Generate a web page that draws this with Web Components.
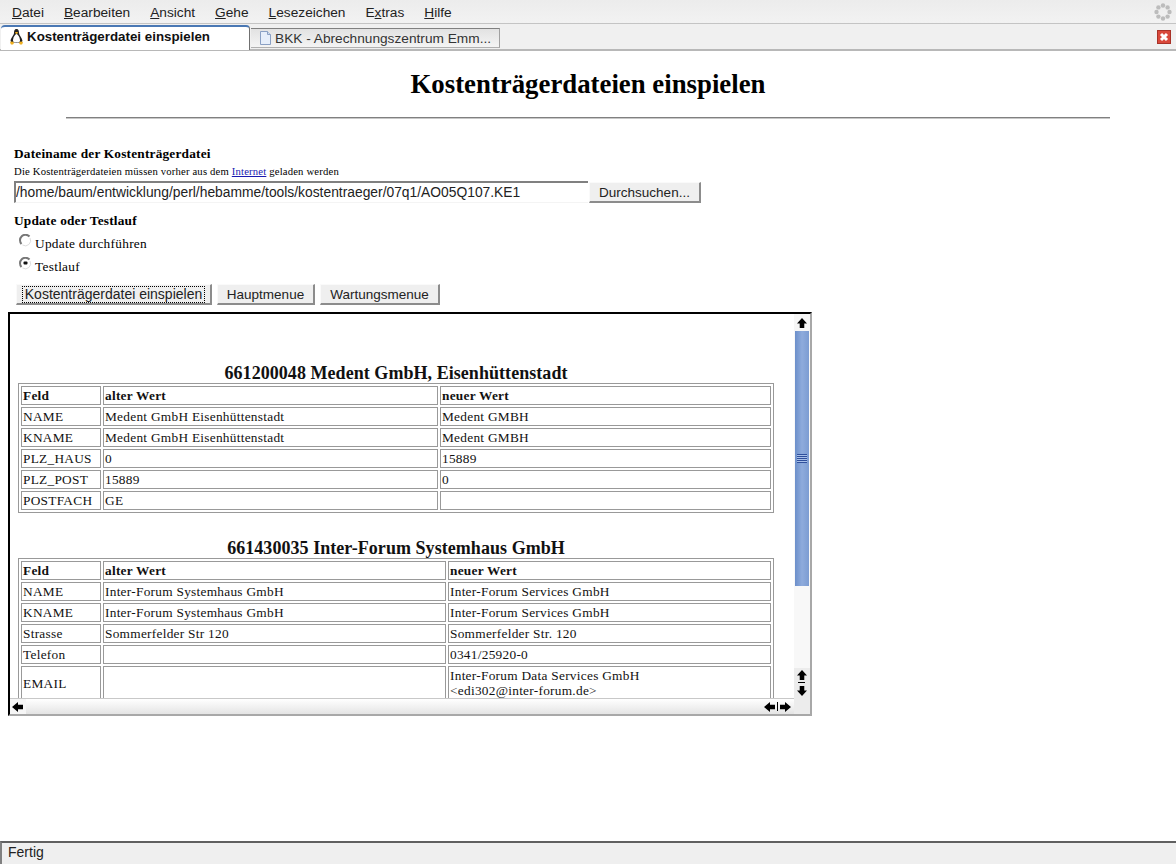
<!DOCTYPE html>
<html lang="de">
<head>
<meta charset="utf-8">
<title>Kostenträgerdateien einspielen</title>
<style>
  html, body { margin: 0; height: 100%; }
  body {
    display: flex;
    flex-direction: column;
    height: 864px;
    overflow: hidden;
    background: #fff;
    font-family: "Liberation Serif", serif;
  }
  form-page { flex: 1; min-height: 0; }
</style>
</head>
<body>
<browser-menubar></browser-menubar>
<browser-tabs></browser-tabs>
<form-page>
  <frame-box>
    <change-table id="t1" title="661200048 Medent GmbH, Eisenhüttenstadt" cols="80,335,331"></change-table>
    <change-table id="t2" title="661430035 Inter-Forum Systemhaus GmbH" cols="80,343,323"></change-table>
  </frame-box>
</form-page>
<browser-status>Fertig</browser-status>

<script>
class BrowserMenubar extends HTMLElement {
  constructor() {
    super();
    const items = [["D","atei"],["B","earbeiten"],["A","nsicht"],["G","ehe"],["L","esezeichen"],["E","x","tras"],["H","ilfe"]];
    const links = items.map((i) => {
      if (i.length == 3) return `<span>${i[0]}<u>${i[1]}</u>${i[2]}</span>`;
      return `<span><u>${i[0]}</u>${i[1]}</span>`;
    }).join("");
    this.attachShadow({ mode: "open" }).innerHTML = `
      <style>
        :host {
          display: flex;
          align-items: center;
          justify-content: space-between;
          height: 22px;
          flex: none;
          padding: 1px 4px 0 12px;
          background: linear-gradient(#ececec, #f2f2f2);
          border-bottom: 1px solid #c4c4c4;
          font: 13.7px "Liberation Sans", sans-serif;
          color: #222;
        }
        nav { display: flex; gap: 20px; }
      </style>
      <nav>${links}</nav>
      <svg width="18" height="18" viewBox="0 0 18 18" fill="#bcbcbc">
        <circle cx="9" cy="2.5" r="2.2"/><circle cx="13.6" cy="4.4" r="2.2"/><circle cx="15.5" cy="9" r="2.2"/>
        <circle cx="13.6" cy="13.6" r="2.2"/><circle cx="9" cy="15.5" r="2.2"/><circle cx="4.4" cy="13.6" r="2.2"/>
        <circle cx="2.5" cy="9" r="2.2"/><circle cx="4.4" cy="4.4" r="2.2"/>
      </svg>`;
  }
}

class BrowserTabs extends HTMLElement {
  constructor() {
    super();
    this.attachShadow({ mode: "open" }).innerHTML = `
      <style>
        :host {
          display: flex;
          align-items: flex-end;
          height: 27px;
          flex: none;
          background: #f0f0f0;
          box-sizing: border-box;
          border-bottom: 2px solid #b8b8b8;
          font: 13.7px "Liberation Sans", sans-serif;
          color: #333;
          position: relative;
        }
        .tab { display: flex; align-items: center; box-sizing: border-box; }
        .on {
          width: 249px;
          height: 25px;
          margin: 0 0 -1px 1px;
          padding: 0 0 5px 8px;
          gap: 3px;
          background: #fff;
          border-top: 2px solid #4a78b4;
          border-right: 1px solid #707070;
          border-radius: 4px 4px 0 0;
          font-size: 13.33px;
          font-weight: bold;
          color: #111;
        }
        .off {
          width: 249px;
          height: 20px;
          padding: 0 0 0 7px;
          gap: 2px;
          margin: 0 0 1px 1px;
          background: linear-gradient(#e2e2e2, #f4f4f4);
          border-top: 1px solid #808080;
          border-right: 1px solid #a0a0a0;
          border-bottom: 1px solid #b0b0b0;
        }
        .close { position: absolute; right: 5px; top: 6px; display: block; }
      </style>
      <div class="tab on">
        <svg width="15" height="17" viewBox="0 0 15 17">
          <path d="M7.500 1C5.400 1 5 3 5 5 5 7 2 10 1.600 12.600 1.400 14 3 15 7.500 15s6.100-1 5.900-2.400C13 10 10 7 10 5c0-2-.4-4-2.500-4z" fill="#222"/>
          <path d="M7.500 6C6 6 4 10 4 12.400 4 14 5.500 14.500 7.500 14.500S11 14 11 12.400C11 10 9 6 7.500 6z" fill="#fff"/>
          <path d="M6.500 4h2l.5 1-1.500 1-1.500-1z" fill="#f0b020"/>
          <path d="M1 14.500c1-1.500 3-1.500 4 .5l-1 1.500H2zM14 14.500c-1-1.500-3-1.500-4 .5l1 1.500h2z" fill="#f0b020"/>
        </svg>
        <span>Kostenträgerdatei einspielen</span>
      </div>
      <div class="tab off">
        <svg width="15" height="16" viewBox="0 0 15 16">
          <path d="M2.500 1.500h7l3 3v10h-10z" fill="#e6eefa" stroke="#8aa0c4"/>
          <path d="M9.500 1.500v3h3" fill="#cfdcf0" stroke="#8aa0c4"/>
        </svg>
        <span>BKK - Abrechnungszentrum Emm...</span>
      </div>
      <svg class="close" width="14" height="14" viewBox="0 0 14 14">
        <rect x=".5" y=".5" width="13" height="13" fill="#d9483b" stroke="#a83228"/>
        <path d="M4 4l6 6M10 4l-6 6" stroke="#fff" stroke-width="3"/>
      </svg>`;
  }
}

class FormPage extends HTMLElement {
  constructor() {
    super();
    this.attachShadow({ mode: "open" }).innerHTML = `
      <style>
        :host { display: block; padding: 0 8px; color: #000; font: 13.33px "Liberation Serif", serif; overflow: hidden; }
        h1 { font-size: 26.8px; line-height: 31px; margin: 0; padding-top: 18px; text-align: center; }
        hr {
          width: 90%;
          height: 0;
          margin: 17px auto 0;
          border: 0;
          border-top: 1px solid #808080;
          border-bottom: 1px solid #c8c8c8;
        }
        .block { padding: 0 6px; }
        h3 { margin: 0; font-size: 13.33px; line-height: 16px; letter-spacing: .19px; }
        .first { padding-top: 27px; }
        small { display: block; font-size: 10.67px; line-height: 14px; padding-top: 2px; letter-spacing: .18px; }
        a { color: #1a1ab0; }
        .file { display: flex; margin-top: 3px; }
        .path {
          box-sizing: border-box;
          width: 574px;
          height: 22px;
          padding: 1px 0 0 0;
          border-top: 2px solid #808080;
          border-left: 2px solid #808080;
          border-bottom: 1px solid #f4f4f4;
          font: 13.83px/17px "Liberation Sans", sans-serif;
          color: #222;
          white-space: nowrap;
          overflow: hidden;
        }
        .second { padding-top: 10px; }
        .radio { display: flex; align-items: flex-start; gap: 3px; height: 23px; padding: 7px 0 0 5px; box-sizing: border-box; letter-spacing: .28px; }
        .radio span { line-height: 16px; }
        .radio svg { margin-top: -2px; }
        .buttons { display: flex; gap: 5px; padding: 9px 0 7px 2px; }
        .buttons gray-button { padding-top: 1px; }
      </style>
      <h1>Kostenträgerdateien einspielen</h1>
      <hr>
      <div class="block first">
        <h3>Dateiname der Kostenträgerdatei</h3>
        <small>Die Kostenträgerdateien müssen vorher aus dem <a href="#">Internet</a> geladen werden</small>
        <div class="file">
          <div class="path">/home/baum/entwicklung/perl/hebamme/tools/kostentraeger/07q1/AO05Q107.KE1</div>
          <gray-button style="margin:1px 0 0 1px;width:112px">Durchsuchen...</gray-button>
        </div>
      </div>
      <div class="block second">
        <h3>Update oder Testlauf</h3>
        <div class="radio">
          <svg width="13" height="13" viewBox="0 0 13 13"><path d="M10.500 2.500A5.300 5.300 0 0 0 2.500 10" fill="none" stroke="#777" stroke-width="2"/><path d="M11 4a5.300 5.300 0 0 1-7.500 7" fill="none" stroke="#ddd"/></svg>
          <span>Update durchführen</span>
        </div>
        <div class="radio">
          <svg width="13" height="13" viewBox="0 0 13 13"><path d="M10.500 2.500A5.300 5.300 0 0 0 2.500 10" fill="none" stroke="#777" stroke-width="2"/><path d="M11 4a5.300 5.300 0 0 1-7.500 7" fill="none" stroke="#ddd"/><rect x="4.500" y="4.500" width="4" height="3" rx="1" fill="#111"/></svg>
          <span>Testlauf</span>
        </div>
        <div class="buttons">
          <gray-button focused style="width:196px">Kostenträgerdatei einspielen</gray-button>
          <gray-button style="width:98px">Hauptmenue</gray-button>
          <gray-button style="width:120px">Wartungsmenue</gray-button>
        </div>
      </div>
      <slot></slot>`;
  }
}

class GrayButton extends HTMLElement {
  constructor() {
    super();
    this.attachShadow({ mode: "open" }).innerHTML = `
      <style>
        :host {
          display: flex;
          align-items: center;
          justify-content: center;
          box-sizing: border-box;
          height: 21px;
          background: #efefef;
          border-top: 1px solid #fafafa;
          border-left: 1px solid #fafafa;
          border-right: 2px solid #8c8c8c;
          border-bottom: 2px solid #8c8c8c;
          font: 13.5px "Liberation Sans", sans-serif;
          color: #222;
        }
        :host([focused]) { font-size: 14px; }
        :host([focused]) span { outline: 1px dotted #000; padding: 0 2px; line-height: 15px; }
      </style>
      <span><slot></slot></span>`;
  }
}

class FrameBox extends HTMLElement {
  constructor() {
    super();
    const up = '<path d="M5.500 0L0 6h3v5h5V6h3z" fill="#000"/>';
    const down = '<path d="M5.500 11L0 5h3V0h5v5h3z" fill="#000"/>';
    const left = '<path d="M0 5.500L6 0v3h5v5H6v3z" fill="#000"/>';
    const right = '<path d="M11 5.500L5 0v3H0v5h5v3z" fill="#000"/>';
    const icon = (d) => `<svg width="10" height="10" viewBox="0 0 11 11">${d}</svg>`;
    const wide = (d) => `<svg width="11" height="10" viewBox="0 0 11 11" preserveAspectRatio="none">${d}</svg>`;
    this.attachShadow({ mode: "open" }).innerHTML = `
      <style>
        :host {
          display: grid;
          grid-template-columns: 784px 16px;
          grid-template-rows: 384px 16px;
          width: 804px;
          box-sizing: border-box;
          border-top: 2px solid #000;
          border-left: 2px solid #000;
          border-right: 2px solid #a8a8a8;
          border-bottom: 2px solid #a8a8a8;
        }
        .view { overflow: hidden; padding: 49px 20px 0 8px; box-sizing: border-box; background: #fff; }
        .v { display: flex; flex-direction: column; background: #f8f8f8; }
        .h { display: flex; justify-content: space-between; align-items: center; background: linear-gradient(#fff, #e4e4e4); border-top: 1px solid #c8c8c8; box-sizing: border-box; }
        .corner { background: #ececec; }
        .btn { height: 17px; display: flex; align-items: center; justify-content: center; flex: none; background: #f6f6f6; padding-right: 1px; box-sizing: border-box; }
        .thumb {
          flex: 1;
          margin: 0 1px;
          display: flex;
          align-items: center;
          justify-content: center;
          background: linear-gradient(90deg, #6c8fca, #8eabdc 50%, #7c9cd2);
        }
        .grip { width: 10px; height: 9px; background: repeating-linear-gradient(#2f4f9c 0 1px, #a8c0e8 1px 2px); }
        .gap { flex: none; height: 82px; }
        .pair { display: flex; flex-direction: column; background: #ececec; }
        .pair .btn { height: 14px; background: #ececec; }
        .pair .btn + hr + .btn { height: 15px; }
        .pair hr { margin: 0 5px 0 4px; border: 0; border-top: 1px solid #000; }
        .hpair { display: flex; align-items: center; padding-right: 3px; }
        .hpair i { width: 1px; height: 9px; background: #000; margin: 0 2px 0 2px; }
      </style>
      <div class="view"><slot></slot></div>
      <div class="v">
        <div class="btn">${icon(up)}</div>
        <div class="thumb"><div class="grip"></div></div>
        <div class="gap"></div>
        <div class="pair">
          <div class="btn">${icon(up)}</div>
          <hr>
          <div class="btn">${icon(down)}</div>
        </div>
      </div>
      <div class="h">
        <div class="btn" style="width:16px;height:15px">${wide(left)}</div>
        <div class="hpair">
          ${wide(left)}<i></i>${wide(right)}
        </div>
      </div>
      <div class="corner"></div>`;
  }
}

class ChangeTable extends HTMLElement {
  set rows(rows) {
    const cols = this.getAttribute("cols").split(",");
    const widths = cols.map((c) => `<col style="width:${c}px">`).join("");
    const body = rows.map((r) => `<tr>${r.map((c) => `<td>${c}</td>`).join("")}</tr>`).join("");
    this.attachShadow({ mode: "open" }).innerHTML = `
      <style>
        :host { display: block; margin-bottom: 25px; font: 13.33px "Liberation Serif", serif; color: #111; letter-spacing: .27px; }
        h2 { margin: 0; font-size: 18px; line-height: 20px; text-align: center; letter-spacing: .05px; }
        table {
          table-layout: fixed;
          width: 756px;
          border: 1px solid #999;
          border-spacing: 2px;
          border-collapse: separate;
        }
        th, td {
          border: 1px solid #999;
          padding: 1px;
          height: 15px;
          line-height: 15px;
          text-align: left;
          overflow: visible;
        }
      </style>
      <h2>${this.getAttribute("title")}</h2>
      <table>
        <colgroup>${widths}</colgroup>
        <tr><th>Feld</th><th>alter Wert</th><th>neuer Wert</th></tr>
        ${body}
      </table>`;
  }
}

class BrowserStatus extends HTMLElement {
  constructor() {
    super();
    this.attachShadow({ mode: "open" }).innerHTML = `
      <style>
        :host {
          display: block;
          flex: none;
          height: 23px;
          box-sizing: border-box;
          padding: 1px 0 0 6px;
          background: #efefef;
          border-top: 2px solid #606060;
          border-left: 2px solid #808080;
          font: 14px/17px "Liberation Sans", sans-serif;
          color: #222;
        }
      </style>
      <slot></slot>`;
  }
}

customElements.define("browser-menubar", BrowserMenubar);
customElements.define("browser-tabs", BrowserTabs);
customElements.define("gray-button", GrayButton);
customElements.define("form-page", FormPage);
customElements.define("frame-box", FrameBox);
customElements.define("change-table", ChangeTable);
customElements.define("browser-status", BrowserStatus);

document.getElementById("t1").rows = [
  ["NAME", "Medent GmbH Eisenhüttenstadt", "Medent GMBH"],
  ["KNAME", "Medent GmbH Eisenhüttenstadt", "Medent GMBH"],
  ["PLZ_HAUS", "0", "15889"],
  ["PLZ_POST", "15889", "0"],
  ["POSTFACH", "GE", ""]
];
document.getElementById("t2").rows = [
  ["NAME", "Inter-Forum Systemhaus GmbH", "Inter-Forum Services GmbH"],
  ["KNAME", "Inter-Forum Systemhaus GmbH", "Inter-Forum Services GmbH"],
  ["Strasse", "Sommerfelder Str 120", "Sommerfelder Str. 120"],
  ["Telefon", "", "0341/25920-0"],
  ["EMAIL", "", "Inter-Forum Data Services GmbH<br>&lt;edi302@inter-forum.de&gt;"]
];
</script>
</body>
</html>
